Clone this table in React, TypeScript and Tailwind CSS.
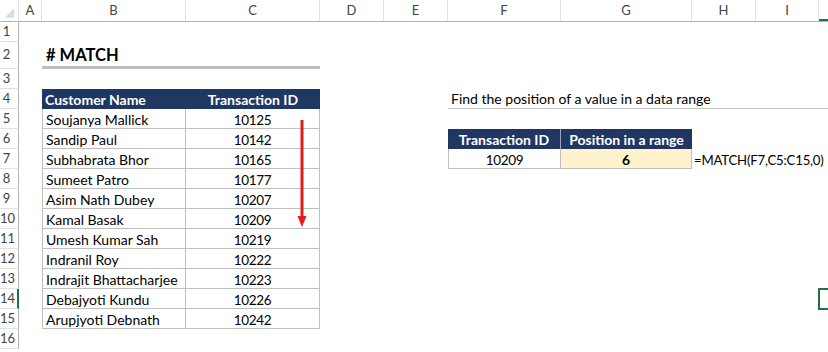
const colWidths = [
  "w-[19px]",
  "w-[23px]",
  "w-[144px]",
  "w-[134px]",
  "w-[64px]",
  "w-[64px]",
  "w-[113px]",
  "w-[131px]",
  "w-[64px]",
  "w-[63px]",
  "w-[64px]",
];
// J sits past the visible edge, so its letter is left off
const colNames = ["", "A", "B", "C", "D", "E", "F", "G", "H", "I", ""];

const customers: [string, number][] = [
  ["Soujanya Mallick", 10125],
  ["Sandip Paul", 10142],
  ["Subhabrata Bhor", 10165],
  ["Sumeet Patro", 10177],
  ["Asim Nath Dubey", 10207],
  ["Kamal Basak", 10209],
  ["Umesh Kumar Sah", 10219],
  ["Indranil Roy", 10222],
  ["Indrajit Bhattacharjee", 10223],
  ["Debajyoti Kundu", 10226],
  ["Arupjyoti Debnath", 10242],
];

const ACTIVE_ROW = 14;
const ACTIVE_COL = 10;

function ColumnHeaders() {
  return (
    <div className="flex h-[22px] border-b border-[#b4b4b4] bg-white">
      {colNames.map((name, i) => (
        <div
          key={i}
          className={`${colWidths[i]} shrink-0 flex items-center justify-center border-r border-[#e1e1e1] text-[13px] text-[#444] ${
            i === ACTIVE_COL ? "border-b-2 border-b-[#217346]" : ""
          }`}
        >
          {i === 0 ? (
            <svg width="19" height="22" viewBox="0 0 19 22">
              <polygon points="15,8 15,18 5,18" fill="#dcdcdc" />
            </svg>
          ) : (
            name
          )}
        </div>
      ))}
    </div>
  );
}

function RowHeaders() {
  const rows = Array.from({ length: 16 }, (_, i) => i + 1);
  return (
    <div className="w-[19px] shrink-0 flex flex-col">
      {rows.map((n) => (
        <div
          key={n}
          className={`${n === 2 ? "h-[27px]" : "h-5"} shrink-0 flex items-center border-b border-[#e1e1e1] text-[13px] text-[#444] ${
            n === ACTIVE_ROW
              ? "border-r-2 border-r-[#217346]"
              : "border-r border-r-[#b4b4b4]"
          }`}
        >
          <span className="w-[13px] text-center">{n}</span>
        </div>
      ))}
    </div>
  );
}

function CustomerTable() {
  return (
    <div className="col-start-2 col-span-2 row-start-4 row-span-12 grid grid-cols-[144px_134px] auto-rows-[20px]">
      <div className="bg-[#203764] text-white font-bold pl-[3px] leading-[18px] pt-[2px]">
        Customer Name
      </div>
      <div className="bg-[#203764] text-white font-bold text-center leading-[18px] pt-[2px]">
        Transaction ID
      </div>
      {customers.map(([name, id]) => (
        <div key={name} className="contents">
          <div className="border-l border-r border-b border-[#bfbfbf] pl-[3px] leading-[18px] pt-[2px] whitespace-nowrap">
            {name}
          </div>
          <div className="border-r border-b border-[#bfbfbf] text-center text-[13.5px] tracking-[-0.3px] leading-[18px] pt-[2px]">
            {id}
          </div>
        </div>
      ))}
    </div>
  );
}

function LookupTable() {
  return (
    <div className="col-start-6 col-span-2 row-start-6 row-span-2 grid grid-cols-[113px_131px] grid-rows-[20px_20px]">
      <div className="bg-[#203764] text-white font-bold text-center border-r border-[#9aa5b8] leading-[18px] pt-[2px]">
        Transaction ID
      </div>
      <div className="bg-[#203764] text-white font-bold text-center leading-[18px] pt-[2px]">
        Position in a range
      </div>
      <div className="border-l border-r border-b border-[#bfbfbf] text-center text-[13.5px] tracking-[-0.3px] leading-[18px] pt-[2px]">
        10209
      </div>
      <div className="bg-[#fff2cc] border-r border-b border-[#bfbfbf] text-center font-bold leading-[18px] pt-[2px]">
        6
      </div>
    </div>
  );
}

export default function App() {
  return (
    <div
      className="w-[828px] h-[352px] overflow-hidden bg-white text-black text-[14px]"
      style={{ fontFamily: 'Lato, "Liberation Sans", Arial, sans-serif' }}
    >
      <ColumnHeaders />
      <div className="flex">
        <RowHeaders />
        <div className="relative grid grid-cols-[23px_144px_134px_64px_64px_113px_131px_64px_63px_64px] grid-rows-[20px_27px_repeat(14,20px)]">
          <div className="col-start-2 col-span-2 row-start-2 border-b-[3px] border-[#bdbdbd] pl-[4px] font-bold text-[16.5px] leading-[26px]">
            # MATCH
          </div>

          <CustomerTable />

          {/* red arrow running down the ID column */}
          <svg
            className="absolute left-[277px] top-[98px]"
            width="12"
            height="108"
            viewBox="0 0 12 108"
          >
            <line x1="6" y1="0" x2="6" y2="98" stroke="#e41b1b" strokeWidth="3" />
            <polygon points="1.5,96 10.5,96 6,107" fill="#e41b1b" />
          </svg>

          <div className="col-start-6 col-span-5 row-start-4 border-b border-[#c4c4c4] pl-[3px] leading-[18px] pt-[1px] whitespace-nowrap">
            Find the position of a value in a data range
          </div>

          <LookupTable />

          <div className="col-start-8 row-start-7 pl-[2px] text-[13.2px] tracking-[-0.2px] leading-[18px] pt-[2px] whitespace-nowrap">
            =MATCH(F7,C5:C15,0)
          </div>

          <div className="col-start-10 row-start-14 -m-px border-2 border-[#217346]" />
        </div>
      </div>
    </div>
  );
}
